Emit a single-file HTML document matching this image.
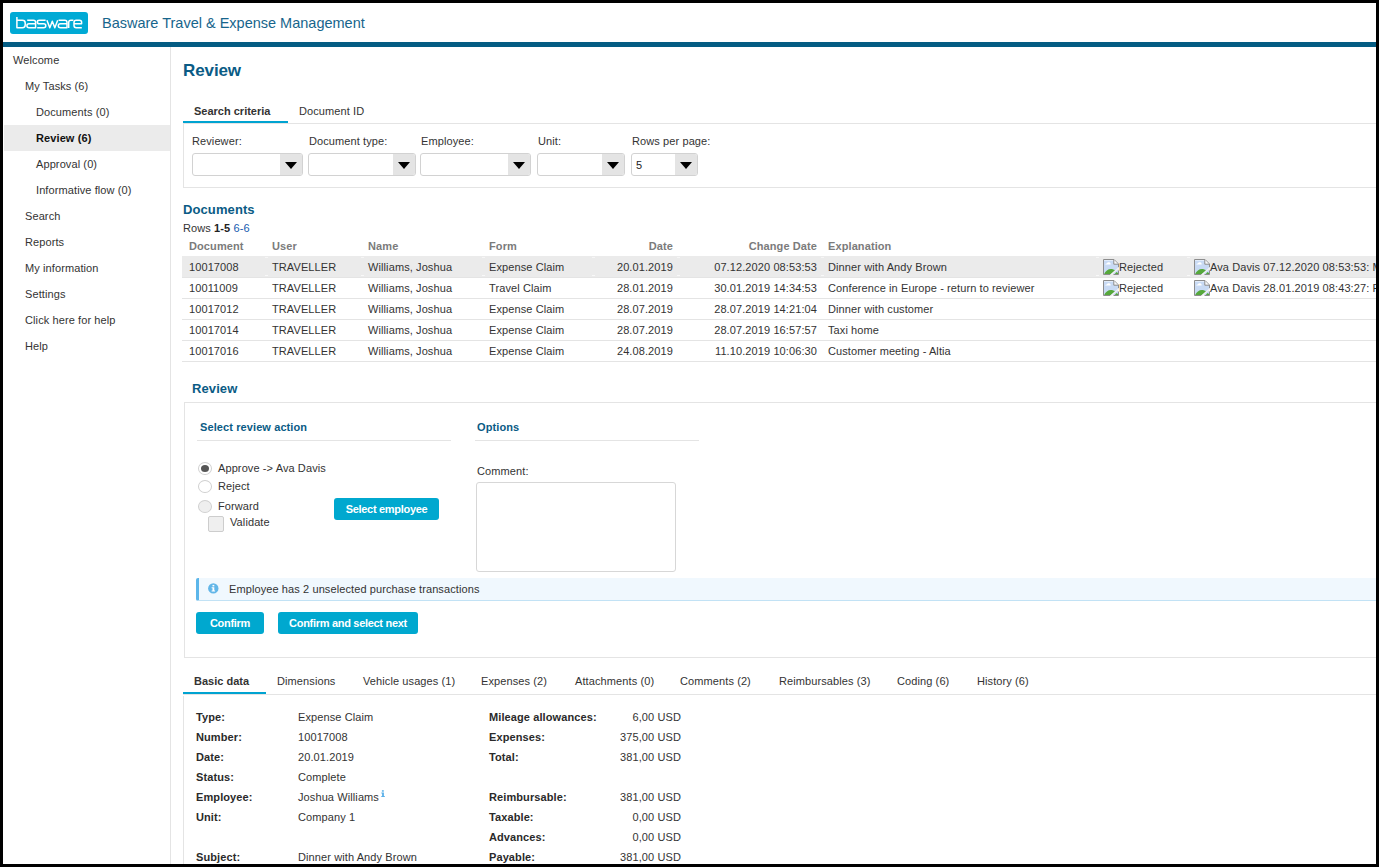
<!DOCTYPE html><html><head><meta charset="utf-8"><style>
html,body{margin:0;padding:0;width:1379px;height:867px;overflow:hidden;background:#000}
#pg{position:absolute;left:3px;top:3px;width:1373px;height:861px;background:#fff;overflow:hidden}
#wrap{position:absolute;left:-3px;top:-3px;width:1379px;height:867px}
.t{position:absolute;white-space:pre;letter-spacing:0.1px;font-family:"Liberation Sans",sans-serif;font-size:11px;line-height:20px;color:#333}
.r{position:absolute}
.logo{font-size:17px;color:#fff;letter-spacing:0.2px;line-height:20px;font-family:"Liberation Sans",sans-serif}
.sel{position:absolute;height:21px;border:1px solid #d2d2d2;border-radius:3px;background:#fff;overflow:hidden}
.dd{position:absolute;right:0;top:0;width:22px;height:21px;background:#e4e4e4}
.tri{position:absolute;left:5px;top:8px;width:0;height:0;border-left:6px solid transparent;border-right:6px solid transparent;border-top:7px solid #000}
.radio{position:absolute;width:12px;height:11px;border:1px solid #d0d0d0;border-radius:50%;background:#fff}
.radio .dot{position:absolute;left:2px;top:2px;width:8px;height:7px;border-radius:50%;background:#555}
.chk{position:absolute;width:14px;height:14px;border:1px solid #cdcdcd;border-radius:2px;background:#efefef}
.btn{position:absolute;letter-spacing:-0.3px;height:22px;line-height:22px;background:#00a8cf;border-radius:3px;color:#fff;font-family:"Liberation Sans",sans-serif;font-size:11px;font-weight:bold;text-align:center;white-space:pre}
svg.bi{display:block}
</style></head><body><div id="pg"><div id="wrap"><div class="r" style="left:10px;top:12px;width:78px;height:22px;background:#00aad5;border-radius:3px"></div>
<svg class="r" style="left:12px;top:12px" width="76" height="22" viewBox="0 0 76 22"><g fill="none" stroke="#fff" stroke-width="1.5" stroke-linejoin="round"><path d="M4.9 5V15.7H10.4Q13.2 15.7 13.2 13V11Q13.2 8.3 10.4 8.3H4.9"/><path d="M15.2 8.3H21.4Q23.6 8.3 23.6 10.5V15.7H17.1Q14.9 15.7 14.9 13.7Q14.9 11.8 17.1 11.8H23.6"/><path d="M33.6 8.3H27.4Q25.3 8.3 25.3 10Q25.3 11.8 27.4 11.8H31.6Q33.8 11.8 33.8 13.75Q33.8 15.7 31.6 15.7H25.2"/><path d="M34.9 8.2L37.8 15.7L40.3 9.2L42.8 15.7L45.7 8.2"/><path d="M46.6 8.3H52.8Q55 8.3 55 10.5V15.7H48.5Q46.3 15.7 46.3 13.7Q46.3 11.8 48.5 11.8H55"/><path d="M56.7 15.9V10.5Q56.7 8.3 58.9 8.3H61.4"/><path d="M69.8 15.7H64.2Q62 15.7 62 13.5V10.5Q62 8.3 64.2 8.3H67.4Q69.6 8.3 69.6 10.3V11.8H62"/></g></svg>
<div class="t" style="top:13px;left:102px;font-size:14.5px;color:#17658c;letter-spacing:0px;">Basware Travel &amp; Expense Management</div>
<div class="r" style="left:3px;top:42px;width:1373px;height:5px;background:#045c83"></div>
<div class="r" style="left:170px;top:47px;width:1px;height:817px;background:#e4e4e4"></div>
<div class="r" style="left:4px;top:125px;width:166px;height:26px;background:#ebebeb"></div>
<div class="t" style="top:50px;left:13px;">Welcome</div>
<div class="t" style="top:76px;left:25px;">My Tasks (6)</div>
<div class="t" style="top:102px;left:36px;">Documents (0)</div>
<div class="t" style="top:128px;left:36px;font-weight:bold;color:#111;">Review (6)</div>
<div class="t" style="top:154px;left:36px;">Approval (0)</div>
<div class="t" style="top:180px;left:36px;">Informative flow (0)</div>
<div class="t" style="top:206px;left:25px;">Search</div>
<div class="t" style="top:232px;left:25px;">Reports</div>
<div class="t" style="top:258px;left:25px;">My information</div>
<div class="t" style="top:284px;left:25px;">Settings</div>
<div class="t" style="top:310px;left:25px;">Click here for help</div>
<div class="t" style="top:336px;left:25px;">Help</div>
<div class="t" style="top:61px;left:183px;font-size:17px;font-weight:bold;color:#0a5b85;letter-spacing:-0.1px;">Review</div>
<div class="t" style="top:101px;left:194px;font-weight:bold;letter-spacing:0px;">Search criteria</div>
<div class="t" style="top:101px;left:299px;">Document ID</div>
<div class="r" style="left:183px;top:121px;width:105px;height:2px;background:#00a3d1"></div>
<div class="r" style="left:183px;top:123px;width:1193px;height:1px;background:#e4e4e4"></div>
<div class="r" style="left:183px;top:123px;width:1px;height:65px;background:#e4e4e4"></div>
<div class="r" style="left:183px;top:187px;width:1193px;height:1px;background:#e4e4e4"></div>
<div class="t" style="top:131px;left:192px;">Reviewer:</div>
<div class="sel" style="left:192px;top:153px;width:109px"><div class="dd"><div class="tri"></div></div></div>
<div class="t" style="top:131px;left:309px;">Document type:</div>
<div class="sel" style="left:308px;top:153px;width:106px"><div class="dd"><div class="tri"></div></div></div>
<div class="t" style="top:131px;left:421px;">Employee:</div>
<div class="sel" style="left:420px;top:153px;width:109px"><div class="dd"><div class="tri"></div></div></div>
<div class="t" style="top:131px;left:538px;">Unit:</div>
<div class="sel" style="left:537px;top:153px;width:86px"><div class="dd"><div class="tri"></div></div></div>
<div class="t" style="top:131px;left:632px;">Rows per page:</div>
<div class="sel" style="left:631px;top:153px;width:65px"><div class="dd"><div class="tri"></div></div></div>
<div class="t" style="top:155px;left:636px;color:#222;">5</div>
<div class="t" style="top:200px;left:183px;font-size:13px;font-weight:bold;color:#0a5b85;letter-spacing:0.1px;">Documents</div>
<div class="t" style="top:218px;left:183px;">Rows <b style="color:#222">1-5</b> <span style="color:#155cb0">6-6</span></div>
<div class="t" style="top:236px;left:189px;font-weight:bold;color:#7b7b7b;">Document</div>
<div class="t" style="top:236px;left:272px;font-weight:bold;color:#7b7b7b;">User</div>
<div class="t" style="top:236px;left:368px;font-weight:bold;color:#7b7b7b;">Name</div>
<div class="t" style="top:236px;left:489px;font-weight:bold;color:#7b7b7b;">Form</div>
<div class="t" style="top:236px;right:706px;text-align:right;font-weight:bold;color:#7b7b7b;">Date</div>
<div class="t" style="top:236px;right:562px;text-align:right;font-weight:bold;color:#7b7b7b;">Change Date</div>
<div class="t" style="top:236px;left:828px;font-weight:bold;color:#7b7b7b;">Explanation</div>
<div class="r" style="left:182px;top:256px;width:1194px;height:21px;background:#ebebeb"></div>
<div class="r" style="left:265px;top:257px;width:3px;height:1px;background:#f6f6f6"></div>
<div class="r" style="left:265px;top:275px;width:3px;height:1px;background:#f8f8f8"></div>
<div class="r" style="left:361px;top:257px;width:3px;height:1px;background:#f6f6f6"></div>
<div class="r" style="left:361px;top:275px;width:3px;height:1px;background:#f8f8f8"></div>
<div class="r" style="left:482px;top:257px;width:3px;height:1px;background:#f6f6f6"></div>
<div class="r" style="left:482px;top:275px;width:3px;height:1px;background:#f8f8f8"></div>
<div class="r" style="left:592px;top:257px;width:3px;height:1px;background:#f6f6f6"></div>
<div class="r" style="left:592px;top:275px;width:3px;height:1px;background:#f8f8f8"></div>
<div class="r" style="left:677px;top:257px;width:3px;height:1px;background:#f6f6f6"></div>
<div class="r" style="left:677px;top:275px;width:3px;height:1px;background:#f8f8f8"></div>
<div class="r" style="left:821px;top:257px;width:3px;height:1px;background:#f6f6f6"></div>
<div class="r" style="left:821px;top:275px;width:3px;height:1px;background:#f8f8f8"></div>
<div class="r" style="left:1096px;top:257px;width:3px;height:1px;background:#f6f6f6"></div>
<div class="r" style="left:1096px;top:275px;width:3px;height:1px;background:#f8f8f8"></div>
<div class="r" style="left:1187px;top:257px;width:3px;height:1px;background:#f6f6f6"></div>
<div class="r" style="left:1187px;top:275px;width:3px;height:1px;background:#f8f8f8"></div>
<div class="t" style="top:257px;left:189px;">10017008</div>
<div class="t" style="top:257px;left:272px;">TRAVELLER</div>
<div class="t" style="top:257px;left:368px;">Williams, Joshua</div>
<div class="t" style="top:257px;left:489px;">Expense Claim</div>
<div class="t" style="top:257px;right:706px;text-align:right;">20.01.2019</div>
<div class="t" style="top:257px;right:562px;text-align:right;">07.12.2020 08:53:53</div>
<div class="t" style="top:257px;left:828px;">Dinner with Andy Brown</div>
<div class="r" style="left:182px;top:277px;width:1194px;height:1px;background:#e4e4e4"></div>
<div class="r" style="left:1103px;top:259px;width:16px;height:16px"><svg class="bi" width="16" height="16" viewBox="0 0 16 16"><path d="M1 1H11L15 5V15H1Z" fill="#c8daf4"/><path d="M1 1H11V2H1Z" fill="#e2ecfa"/><path d="M2.3 5.6Q2.3 4.3 3.8 4.4Q4.6 2.7 6.3 3.3Q7.8 3.7 7.7 5.6Z" fill="#fff"/><path d="M1 15.2C2.5 12 5 10 8 10C9.5 10 11 10.5 12 11.5L7.5 15.2Z" fill="#56a83b"/><path d="M11.5 15.2L13.5 13L15 14V15.2Z" fill="#56a83b"/><path d="M0.5 15.5V0.5H11L15.5 5V8.5M15.5 11.5V15.5H10.5M7.5 15.5H0.5" fill="none" stroke="#8c8c8c"/><path d="M10.8 0.8V5.2H15.2" fill="#fafafa" stroke="#8c8c8c"/><path d="M7.5 16.2L16.2 8.5" stroke="#f3f1f3" stroke-width="1.3"/></svg></div>
<div class="t" style="top:257px;left:1119px;">Rejected</div>
<div class="r" style="left:1194px;top:259px;width:16px;height:16px"><svg class="bi" width="16" height="16" viewBox="0 0 16 16"><path d="M1 1H11L15 5V15H1Z" fill="#c8daf4"/><path d="M1 1H11V2H1Z" fill="#e2ecfa"/><path d="M2.3 5.6Q2.3 4.3 3.8 4.4Q4.6 2.7 6.3 3.3Q7.8 3.7 7.7 5.6Z" fill="#fff"/><path d="M1 15.2C2.5 12 5 10 8 10C9.5 10 11 10.5 12 11.5L7.5 15.2Z" fill="#56a83b"/><path d="M11.5 15.2L13.5 13L15 14V15.2Z" fill="#56a83b"/><path d="M0.5 15.5V0.5H11L15.5 5V8.5M15.5 11.5V15.5H10.5M7.5 15.5H0.5" fill="none" stroke="#8c8c8c"/><path d="M10.8 0.8V5.2H15.2" fill="#fafafa" stroke="#8c8c8c"/><path d="M7.5 16.2L16.2 8.5" stroke="#f3f1f3" stroke-width="1.3"/></svg></div>
<div class="t" style="top:257px;left:1210px;">Ava Davis 07.12.2020 08:53:53: M</div>
<div class="t" style="top:278px;left:189px;">10011009</div>
<div class="t" style="top:278px;left:272px;">TRAVELLER</div>
<div class="t" style="top:278px;left:368px;">Williams, Joshua</div>
<div class="t" style="top:278px;left:489px;">Travel Claim</div>
<div class="t" style="top:278px;right:706px;text-align:right;">28.01.2019</div>
<div class="t" style="top:278px;right:562px;text-align:right;">30.01.2019 14:34:53</div>
<div class="t" style="top:278px;left:828px;">Conference in Europe - return to reviewer</div>
<div class="r" style="left:182px;top:298px;width:1194px;height:1px;background:#e4e4e4"></div>
<div class="r" style="left:1103px;top:280px;width:16px;height:16px"><svg class="bi" width="16" height="16" viewBox="0 0 16 16"><path d="M1 1H11L15 5V15H1Z" fill="#c8daf4"/><path d="M1 1H11V2H1Z" fill="#e2ecfa"/><path d="M2.3 5.6Q2.3 4.3 3.8 4.4Q4.6 2.7 6.3 3.3Q7.8 3.7 7.7 5.6Z" fill="#fff"/><path d="M1 15.2C2.5 12 5 10 8 10C9.5 10 11 10.5 12 11.5L7.5 15.2Z" fill="#56a83b"/><path d="M11.5 15.2L13.5 13L15 14V15.2Z" fill="#56a83b"/><path d="M0.5 15.5V0.5H11L15.5 5V8.5M15.5 11.5V15.5H10.5M7.5 15.5H0.5" fill="none" stroke="#8c8c8c"/><path d="M10.8 0.8V5.2H15.2" fill="#fafafa" stroke="#8c8c8c"/><path d="M7.5 16.2L16.2 8.5" stroke="#f3f1f3" stroke-width="1.3"/></svg></div>
<div class="t" style="top:278px;left:1119px;">Rejected</div>
<div class="r" style="left:1194px;top:280px;width:16px;height:16px"><svg class="bi" width="16" height="16" viewBox="0 0 16 16"><path d="M1 1H11L15 5V15H1Z" fill="#c8daf4"/><path d="M1 1H11V2H1Z" fill="#e2ecfa"/><path d="M2.3 5.6Q2.3 4.3 3.8 4.4Q4.6 2.7 6.3 3.3Q7.8 3.7 7.7 5.6Z" fill="#fff"/><path d="M1 15.2C2.5 12 5 10 8 10C9.5 10 11 10.5 12 11.5L7.5 15.2Z" fill="#56a83b"/><path d="M11.5 15.2L13.5 13L15 14V15.2Z" fill="#56a83b"/><path d="M0.5 15.5V0.5H11L15.5 5V8.5M15.5 11.5V15.5H10.5M7.5 15.5H0.5" fill="none" stroke="#8c8c8c"/><path d="M10.8 0.8V5.2H15.2" fill="#fafafa" stroke="#8c8c8c"/><path d="M7.5 16.2L16.2 8.5" stroke="#f3f1f3" stroke-width="1.3"/></svg></div>
<div class="t" style="top:278px;left:1210px;">Ava Davis 28.01.2019 08:43:27: R</div>
<div class="t" style="top:299px;left:189px;">10017012</div>
<div class="t" style="top:299px;left:272px;">TRAVELLER</div>
<div class="t" style="top:299px;left:368px;">Williams, Joshua</div>
<div class="t" style="top:299px;left:489px;">Expense Claim</div>
<div class="t" style="top:299px;right:706px;text-align:right;">28.07.2019</div>
<div class="t" style="top:299px;right:562px;text-align:right;">28.07.2019 14:21:04</div>
<div class="t" style="top:299px;left:828px;">Dinner with customer</div>
<div class="r" style="left:182px;top:319px;width:1194px;height:1px;background:#e4e4e4"></div>
<div class="t" style="top:320px;left:189px;">10017014</div>
<div class="t" style="top:320px;left:272px;">TRAVELLER</div>
<div class="t" style="top:320px;left:368px;">Williams, Joshua</div>
<div class="t" style="top:320px;left:489px;">Expense Claim</div>
<div class="t" style="top:320px;right:706px;text-align:right;">28.07.2019</div>
<div class="t" style="top:320px;right:562px;text-align:right;">28.07.2019 16:57:57</div>
<div class="t" style="top:320px;left:828px;">Taxi home</div>
<div class="r" style="left:182px;top:340px;width:1194px;height:1px;background:#e4e4e4"></div>
<div class="t" style="top:341px;left:189px;">10017016</div>
<div class="t" style="top:341px;left:272px;">TRAVELLER</div>
<div class="t" style="top:341px;left:368px;">Williams, Joshua</div>
<div class="t" style="top:341px;left:489px;">Expense Claim</div>
<div class="t" style="top:341px;right:706px;text-align:right;">24.08.2019</div>
<div class="t" style="top:341px;right:562px;text-align:right;">11.10.2019 10:06:30</div>
<div class="t" style="top:341px;left:828px;">Customer meeting - Altia</div>
<div class="r" style="left:182px;top:361px;width:1194px;height:1px;background:#e4e4e4"></div>
<div class="t" style="top:379px;left:192px;font-size:13px;font-weight:bold;color:#0a5b85;">Review</div>
<div class="r" style="left:184px;top:402px;width:1192px;height:1px;background:#e4e4e4"></div>
<div class="r" style="left:184px;top:402px;width:1px;height:256px;background:#e4e4e4"></div>
<div class="r" style="left:184px;top:657px;width:1192px;height:1px;background:#e4e4e4"></div>
<div class="t" style="top:417px;left:200px;font-weight:bold;color:#0a5b85;">Select review action</div>
<div class="r" style="left:197px;top:440px;width:254px;height:1px;background:#e4e4e4"></div>
<div class="t" style="top:417px;left:477px;font-weight:bold;color:#0a5b85;">Options</div>
<div class="r" style="left:475px;top:440px;width:224px;height:1px;background:#e4e4e4"></div>
<div class="radio" style="left:198px;top:462px"><div class="dot"></div></div>
<div class="t" style="top:458px;left:218px;">Approve -&gt; Ava Davis</div>
<div class="radio" style="left:198px;top:480px"></div>
<div class="t" style="top:476px;left:218px;">Reject</div>
<div class="radio" style="left:198px;top:500px;background:#efefef"></div>
<div class="t" style="top:496px;left:218px;">Forward</div>
<div class="chk" style="left:208px;top:516px"></div>
<div class="t" style="top:512px;left:230px;">Validate</div>
<div class="btn" style="left:334px;top:498px;width:105px">Select employee</div>
<div class="t" style="top:461px;left:477px;">Comment:</div>
<div class="r" style="left:476px;top:482px;width:200px;height:90px;border:1px solid #d7d7d7;border-radius:3px;box-sizing:border-box;background:#fff"></div>
<div class="r" style="left:196px;top:578px;width:1180px;height:23px;background:#f0f8fe;border-left:3px solid #5cb6ea;border-bottom:1px solid #c2e2f5;box-sizing:border-box;border-radius:2px 0 0 2px"></div>
<svg class="r" style="left:207px;top:582px" width="13" height="13" viewBox="0 0 13 13"><circle cx="6.3" cy="6.4" r="5.2" fill="#62b6e8"/><rect x="5.5" y="2.9" width="1.8" height="1.5" fill="#fff"/><path d="M4.6 5.3H7.3V8.6H8.1V9.6H4.6V8.6H5.5V6.2H4.6Z" fill="#fff"/></svg>
<div class="t" style="top:579px;left:229px;letter-spacing:0.1px;">Employee has 2 unselected purchase transactions</div>
<div class="btn" style="left:196px;top:612px;width:68px">Confirm</div>
<div class="btn" style="left:278px;top:612px;width:140px">Confirm and select next</div>
<div class="t" style="top:671px;left:194px;font-weight:bold;letter-spacing:0px;">Basic data</div>
<div class="t" style="top:671px;left:277px;letter-spacing:0.1px;">Dimensions</div>
<div class="t" style="top:671px;left:363px;letter-spacing:0.1px;">Vehicle usages (1)</div>
<div class="t" style="top:671px;left:481px;letter-spacing:0.1px;">Expenses (2)</div>
<div class="t" style="top:671px;left:575px;letter-spacing:0.1px;">Attachments (0)</div>
<div class="t" style="top:671px;left:680px;letter-spacing:0.1px;">Comments (2)</div>
<div class="t" style="top:671px;left:779px;letter-spacing:0.1px;">Reimbursables (3)</div>
<div class="t" style="top:671px;left:897px;letter-spacing:0.1px;">Coding (6)</div>
<div class="t" style="top:671px;left:977px;letter-spacing:0.1px;">History (6)</div>
<div class="r" style="left:183px;top:692px;width:83px;height:2px;background:#00a3d1"></div>
<div class="r" style="left:183px;top:694px;width:1193px;height:1px;background:#e4e4e4"></div>
<div class="r" style="left:183px;top:696px;width:1px;height:168px;background:#e4e4e4"></div>
<div class="t" style="top:707px;left:196px;font-weight:bold;color:#2a2a2a;">Type:</div>
<div class="t" style="top:707px;left:298px;">Expense Claim</div>
<div class="t" style="top:727px;left:196px;font-weight:bold;color:#2a2a2a;">Number:</div>
<div class="t" style="top:727px;left:298px;">10017008</div>
<div class="t" style="top:747px;left:196px;font-weight:bold;color:#2a2a2a;">Date:</div>
<div class="t" style="top:747px;left:298px;">20.01.2019</div>
<div class="t" style="top:767px;left:196px;font-weight:bold;color:#2a2a2a;">Status:</div>
<div class="t" style="top:767px;left:298px;">Complete</div>
<div class="t" style="top:787px;left:196px;font-weight:bold;color:#2a2a2a;">Employee:</div>
<div class="t" style="top:787px;left:298px;">Joshua Williams</div>
<div class="t" style="top:807px;left:196px;font-weight:bold;color:#2a2a2a;">Unit:</div>
<div class="t" style="top:807px;left:298px;">Company 1</div>
<div class="t" style="top:847px;left:196px;font-weight:bold;color:#2a2a2a;">Subject:</div>
<div class="t" style="top:847px;left:298px;">Dinner with Andy Brown</div>
<svg class="r" style="left:381px;top:790px" width="4" height="8" viewBox="0 0 4 8"><rect x="0.9" y="0.2" width="1.9" height="1.5" fill="#5ab0e8"/><path d="M0.3 2.5H2.9V6H3.8V7H0.3V6H1.1V3.4H0.3Z" fill="#5ab0e8"/></svg>
<div class="t" style="top:707px;left:489px;font-weight:bold;color:#2a2a2a;">Mileage allowances:</div>
<div class="t" style="top:707px;right:698px;text-align:right;">6,00 USD</div>
<div class="t" style="top:727px;left:489px;font-weight:bold;color:#2a2a2a;">Expenses:</div>
<div class="t" style="top:727px;right:698px;text-align:right;">375,00 USD</div>
<div class="t" style="top:747px;left:489px;font-weight:bold;color:#2a2a2a;">Total:</div>
<div class="t" style="top:747px;right:698px;text-align:right;">381,00 USD</div>
<div class="t" style="top:787px;left:489px;font-weight:bold;color:#2a2a2a;">Reimbursable:</div>
<div class="t" style="top:787px;right:698px;text-align:right;">381,00 USD</div>
<div class="t" style="top:807px;left:489px;font-weight:bold;color:#2a2a2a;">Taxable:</div>
<div class="t" style="top:807px;right:698px;text-align:right;">0,00 USD</div>
<div class="t" style="top:827px;left:489px;font-weight:bold;color:#2a2a2a;">Advances:</div>
<div class="t" style="top:827px;right:698px;text-align:right;">0,00 USD</div>
<div class="t" style="top:847px;left:489px;font-weight:bold;color:#2a2a2a;">Payable:</div>
<div class="t" style="top:847px;right:698px;text-align:right;">381,00 USD</div></div></div></body></html>
